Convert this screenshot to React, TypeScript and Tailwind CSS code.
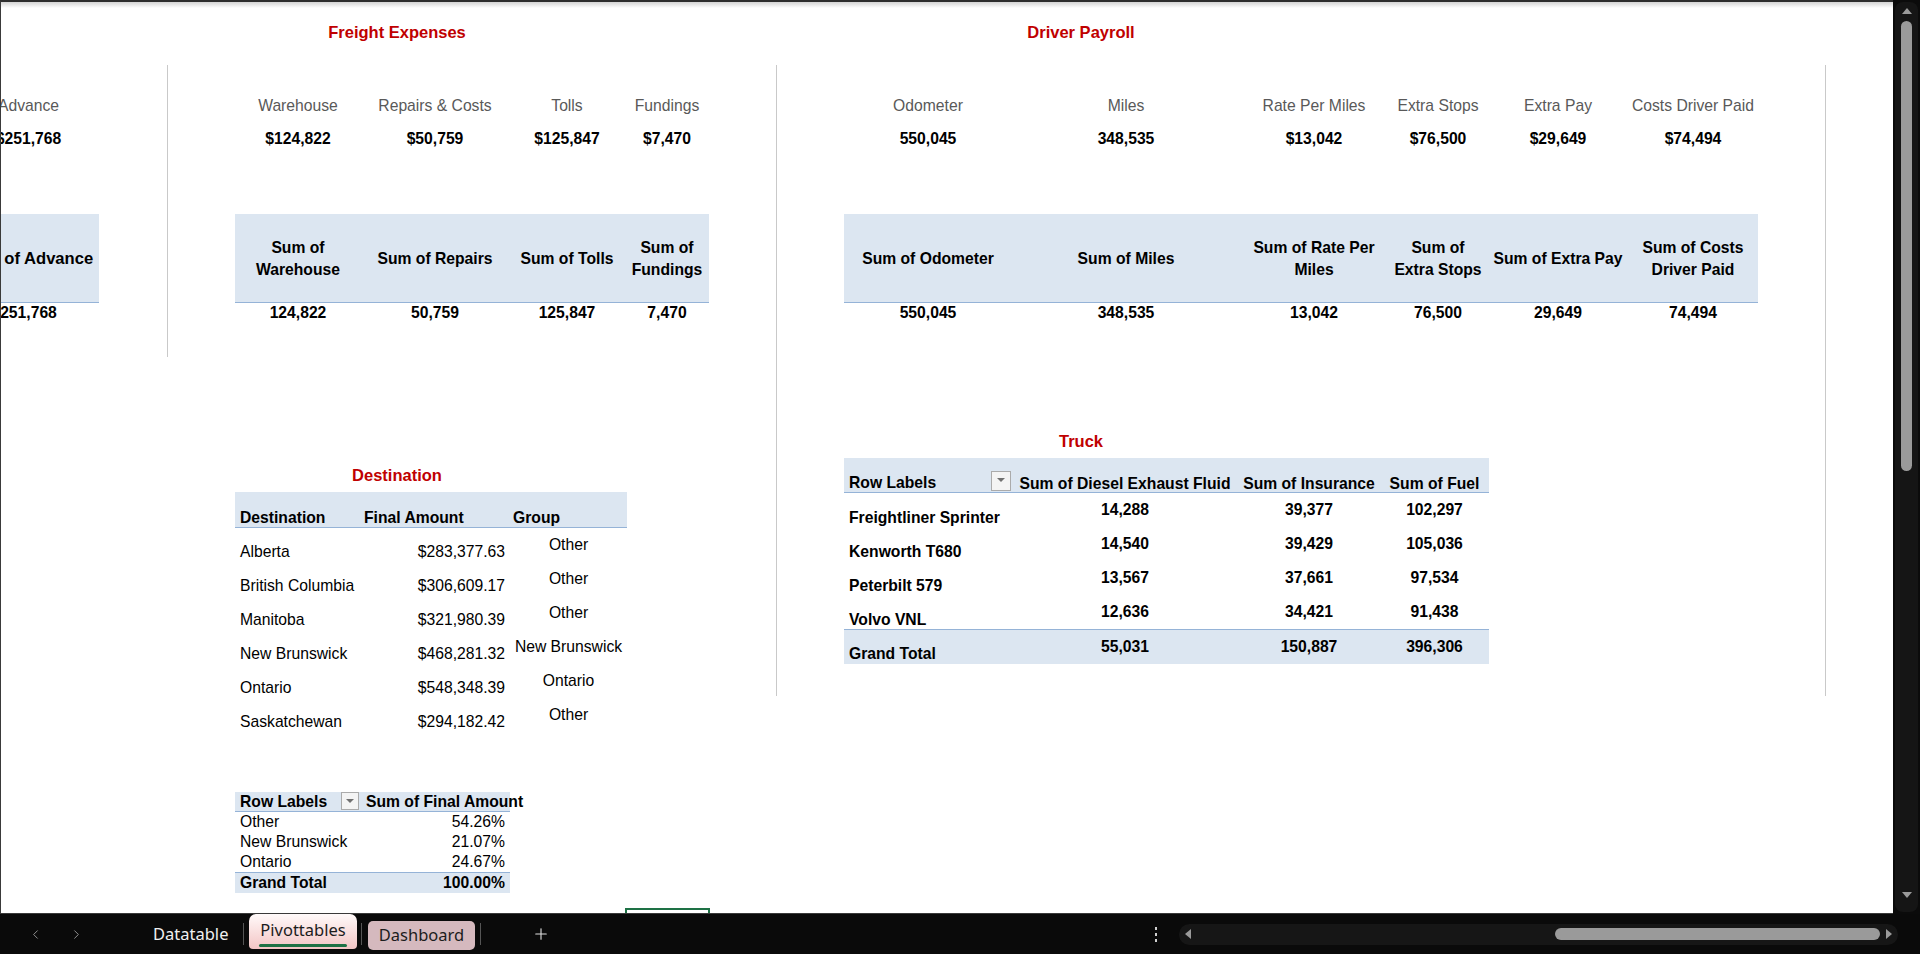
import React from "react";
import { ChevronLeft, ChevronRight, Plus } from "lucide-react";

type Col = { w: string; label: string; value: string; head: string[]; sum: string };

const advanceCols: Col[] = [
  { w: "w-[141px]", label: "Advance", value: "$251,768", head: ["Sum of Advance"], sum: "251,768" },
];
const freightCols: Col[] = [
  { w: "w-[126px]", label: "Warehouse", value: "$124,822", head: ["Sum of", "Warehouse"], sum: "124,822" },
  { w: "w-[148px]", label: "Repairs & Costs", value: "$50,759", head: ["Sum of Repairs"], sum: "50,759" },
  { w: "w-[116px]", label: "Tolls", value: "$125,847", head: ["Sum of Tolls"], sum: "125,847" },
  { w: "w-[84px]", label: "Fundings", value: "$7,470", head: ["Sum of", "Fundings"], sum: "7,470" },
];
const driverCols: Col[] = [
  { w: "w-[168px]", label: "Odometer", value: "550,045", head: ["Sum of Odometer"], sum: "550,045" },
  { w: "w-[228px]", label: "Miles", value: "348,535", head: ["Sum of Miles"], sum: "348,535" },
  { w: "w-[148px]", label: "Rate Per Miles", value: "$13,042", head: ["Sum of Rate Per", "Miles"], sum: "13,042" },
  { w: "w-[100px]", label: "Extra Stops", value: "$76,500", head: ["Sum of", "Extra Stops"], sum: "76,500" },
  { w: "w-[140px]", label: "Extra Pay", value: "$29,649", head: ["Sum of Extra Pay"], sum: "29,649" },
  { w: "w-[130px]", label: "Costs Driver Paid", value: "$74,494", head: ["Sum of Costs", "Driver Paid"], sum: "74,494" },
];

const destinations = [
  ["Alberta", "$283,377.63", "Other"],
  ["British Columbia", "$306,609.17", "Other"],
  ["Manitoba", "$321,980.39", "Other"],
  ["New Brunswick", "$468,281.32", "New Brunswick"],
  ["Ontario", "$548,348.39", "Ontario"],
  ["Saskatchewan", "$294,182.42", "Other"],
];

const trucks = [
  ["Freightliner Sprinter", "14,288", "39,377", "102,297"],
  ["Kenworth T680", "14,540", "39,429", "105,036"],
  ["Peterbilt 579", "13,567", "37,661", "97,534"],
  ["Volvo VNL", "12,636", "34,421", "91,438"],
];

const groups = [
  ["Other", "54.26%"],
  ["New Brunswick", "21.07%"],
  ["Ontario", "24.67%"],
];

function DropBtn({ big }: { big?: boolean }) {
  return (
    <div
      className={`${big ? "h-[20px] w-[20px]" : "h-[18px] w-[18px]"} flex shrink-0 items-start justify-center border border-[#ababab] bg-[#f4f4f4] pt-[6px]`}
    >
      <div className="h-0 w-0 border-x-[4px] border-t-[4px] border-x-transparent border-t-[#707070]" />
    </div>
  );
}

function KpiBlock({ cols, wide }: { cols: Col[]; wide?: boolean }) {
  return (
    <>
      <div className="mt-[54px] flex h-[20px] leading-[20px] text-[#595959]">
        {cols.map((c) => (
          <div key={c.label} className={`${c.w} shrink-0 whitespace-nowrap text-center`}>
            {c.label}
          </div>
        ))}
      </div>
      <div className="mt-[13px] flex h-[20px] font-bold leading-[20px] text-black">
        {cols.map((c) => (
          <div key={c.label} className={`${c.w} shrink-0 whitespace-nowrap text-center`}>
            {c.value}
          </div>
        ))}
      </div>
      <div
        className={`${wide ? "text-[16.6px]" : ""} mt-[65px] flex h-[89px] border-b border-[#95b3d7] bg-[#dce6f1] pt-[2px] font-bold leading-[22px] text-black`}
      >
        {cols.map((c) => (
          <div key={c.label} className={`${c.w} flex shrink-0 flex-col items-center justify-center text-center`}>
            {c.head.map((l) => (
              <div key={l} className="whitespace-nowrap">
                {l}
              </div>
            ))}
          </div>
        ))}
      </div>
      <div className="flex h-[20px] font-bold leading-[20px] text-black">
        {cols.map((c) => (
          <div key={c.label} className={`${c.w} shrink-0 whitespace-nowrap text-center`}>
            {c.sum}
          </div>
        ))}
      </div>
    </>
  );
}

function Sheet() {
  return (
    <div className="relative h-[914px] w-[1893px] shrink-0 overflow-hidden border-b border-l border-t-2 border-b-[#3a3a3a] border-l-[#3a3a3a] border-t-[#2e2e2e] bg-white font-['Liberation_Sans',Arial,sans-serif] text-[15.7px] text-black">
      <div className="pointer-events-none absolute left-0 right-0 top-0 h-[6px] bg-gradient-to-b from-[#d4d4d4] to-white" />

      <div className="-ml-[40px] flex items-start">
        {/* Column A (cut off) */}
        <div className="flex w-[206px] shrink-0 flex-col items-start">
          <div className="-ml-[3px] flex flex-col items-start">
            <div className="mt-[20px] h-[20px]" />
            <KpiBlock cols={advanceCols} wide />
          </div>
        </div>
        <div className="mt-[63px] h-[292px] w-px shrink-0 bg-[#c9c9c9]" />

        {/* Column B : Freight + Destination */}
        <div className="flex w-[608px] shrink-0 flex-col items-start pl-[67px]">
          <div className="mt-[20px] h-[20px] w-[324px] text-center text-[16.5px] font-bold leading-[20px] text-[#c00000]">
            Freight Expenses
          </div>
          <KpiBlock cols={freightCols} />

          <div className="mt-[142px] h-[20px] w-[324px] text-center text-[16.5px] font-bold leading-[20px] text-[#c00000]">
            Destination
          </div>
          <div className="mt-[7px] w-[392px]">
            <div className="flex h-[36px] items-end border-b border-[#95b3d7] bg-[#dce6f1] font-bold leading-[20px]">
              <div className="w-[124px] shrink-0 translate-y-px pl-[5px]">Destination</div>
              <div className="w-[151px] shrink-0 translate-y-px whitespace-nowrap pl-[5px]">Final Amount</div>
              <div className="w-[117px] shrink-0 translate-y-px pl-[3px]">Group</div>
            </div>
            {destinations.map(([n, a, g]) => (
              <div key={n} className="flex h-[34px] leading-[20px]">
                <div className="w-[124px] shrink-0 self-end whitespace-nowrap pl-[5px]">{n}</div>
                <div className="w-[151px] shrink-0 self-end pr-[5px] text-right">{a}</div>
                <div className="w-[117px] shrink-0 self-center whitespace-nowrap text-center">{g}</div>
              </div>
            ))}
          </div>

          <div className="mt-[60px] w-[275px] leading-[20px]">
            <div className="flex h-[20px] border-b border-[#95b3d7] bg-[#dce6f1] font-bold">
              <div className="flex w-[125px] shrink-0 items-start justify-between pl-[5px] pr-[1px]">
                <span className="whitespace-nowrap leading-[19px]">Row Labels</span>
                <DropBtn />
              </div>
              <div className="w-[150px] shrink-0 whitespace-nowrap pl-[6px] leading-[19px]">Sum of Final Amount</div>
            </div>
            {groups.map(([n, v]) => (
              <div key={n} className="flex h-[20px] leading-[20px]">
                <div className="w-[125px] shrink-0 whitespace-nowrap pl-[5px]">{n}</div>
                <div className="w-[150px] shrink-0 pr-[5px] text-right">{v}</div>
              </div>
            ))}
            <div className="flex h-[21px] border-t border-[#95b3d7] bg-[#dce6f1] font-bold leading-[20px]">
              <div className="w-[125px] shrink-0 whitespace-nowrap pl-[5px]">Grand Total</div>
              <div className="w-[150px] shrink-0 pr-[5px] text-right">100.00%</div>
            </div>
          </div>
        </div>
        <div className="mt-[63px] h-[631px] w-px shrink-0 bg-[#c9c9c9]" />

        {/* Column C : Driver Payroll + Truck */}
        <div className="flex w-[1048px] shrink-0 flex-col items-start pl-[67px]">
          <div className="mt-[20px] h-[20px] w-[474px] text-center text-[16.5px] font-bold leading-[20px] text-[#c00000]">
            Driver Payroll
          </div>
          <KpiBlock cols={driverCols} />

          <div className="mt-[108px] h-[20px] w-[474px] text-center text-[16.5px] font-bold leading-[20px] text-[#c00000]">
            Truck
          </div>
          <div className="mt-[7px] w-[645px] font-bold leading-[20px]">
            <div className="flex h-[35px] border-b border-[#95b3d7] bg-[#dce6f1]">
              <div className="flex w-[168px] shrink-0 items-end justify-between pb-px pl-[5px] pr-px">
                <span className="translate-y-[2px] whitespace-nowrap leading-[20px]">Row Labels</span>
                <DropBtn big />
              </div>
              <div className="w-[226px] shrink-0 translate-y-[2px] self-end whitespace-nowrap text-center">Sum of Diesel Exhaust Fluid</div>
              <div className="w-[142px] shrink-0 translate-y-[2px] self-end whitespace-nowrap text-center">Sum of Insurance</div>
              <div className="w-[109px] shrink-0 translate-y-[2px] self-end whitespace-nowrap text-center">Sum of Fuel</div>
            </div>
            {trucks.map(([n, a, b, c]) => (
              <div key={n} className="flex h-[34px]">
                <div className="w-[168px] shrink-0 translate-y-px self-end whitespace-nowrap pl-[5px]">{n}</div>
                <div className="w-[226px] shrink-0 self-center text-center">{a}</div>
                <div className="w-[142px] shrink-0 self-center text-center">{b}</div>
                <div className="w-[109px] shrink-0 self-center text-center">{c}</div>
              </div>
            ))}
            <div className="flex h-[35px] border-t border-[#95b3d7] bg-[#dce6f1]">
              <div className="w-[168px] shrink-0 self-end whitespace-nowrap pl-[5px]">Grand Total</div>
              <div className="w-[226px] shrink-0 self-center text-center">55,031</div>
              <div className="w-[142px] shrink-0 self-center text-center">150,887</div>
              <div className="w-[109px] shrink-0 self-center text-center">396,306</div>
            </div>
          </div>
        </div>
        <div className="mt-[63px] h-[631px] w-px shrink-0 bg-[#c9c9c9]" />
      </div>

      {/* active cell peeking at bottom */}
      <div className="absolute bottom-0 left-[624px] h-[5px] w-[85px] border-x-2 border-t-2 border-[#1e7145]" />
    </div>
  );
}

function VScroll() {
  return (
    <div className="flex h-[914px] w-[27px] shrink-0 bg-[#0b0b0b] p-[2px]">
      <div className="flex flex-1 flex-col items-center rounded-[8px] bg-[#151515]">
        <div className="mt-[6px] h-0 w-0 border-x-[5px] border-b-[6px] border-x-transparent border-b-[#9a9a9a]" />
        <div className="mt-[7px] h-[450px] w-[11px] rounded-full bg-[#9a9a9a]" />
        <div className="mb-[14px] mt-auto h-0 w-0 border-x-[5px] border-t-[6px] border-x-transparent border-t-[#9a9a9a]" />
      </div>
    </div>
  );
}

function TabBar() {
  return (
    <div className="flex h-[40px] items-center bg-[#0a0a0a] font-['Noto_Sans','Open_Sans',sans-serif] text-[16.5px]">
      <div className="flex h-full w-[153px] shrink-0 items-center">
        <ChevronLeft className="ml-[28px] text-[#a0a0a0]" size={15} strokeWidth={1.4} />
        <ChevronRight className="ml-[26px] text-[#a0a0a0]" size={15} strokeWidth={1.4} />
      </div>
      <div className="w-[90px] shrink-0 pt-[1px] text-[#f0f0f0]">Datatable</div>
      <div className="h-[22px] w-px shrink-0 bg-[#555]" />
      <div className="ml-[5px] flex h-[35px] w-[108px] shrink-0 flex-col items-center self-start rounded-b-[4px] rounded-t-[7px] bg-gradient-to-b from-[#fffafa] to-[#f2c5c5] pt-[4px]">
        <span className="leading-[24px] text-[#1c1c1c]">Pivottables</span>
        <div className="mt-[2px] h-[3px] w-[88px] rounded-full bg-[#1e7145]" />
      </div>
      <div className="ml-[4px] h-[22px] w-px shrink-0 bg-[#555]" />
      <div className="ml-[6px] mt-[2px] flex h-[29px] w-[107px] shrink-0 items-center justify-center rounded-[5px] bg-[#d5b9be] text-[#1c1c1c]">
        Dashboard
      </div>
      <div className="ml-[5px] h-[22px] w-px shrink-0 bg-[#555]" />
      <Plus className="ml-[51px] text-[#e0e0e0]" size={18} strokeWidth={1.5} />
      <div className="ml-[604px] flex w-[4px] flex-col items-center gap-[3px]">
        <div className="h-[3px] w-[2px] bg-[#d0d0d0]" />
        <div className="h-[3px] w-[2px] bg-[#d0d0d0]" />
        <div className="h-[3px] w-[2px] bg-[#d0d0d0]" />
      </div>
      <div className="ml-[21px] flex h-[21px] w-[719px] shrink-0 items-center rounded-full bg-[#161616] px-[6px]">
        <div className="h-0 w-0 border-y-[5px] border-r-[6px] border-y-transparent border-r-[#9a9a9a]" />
        <div className="ml-auto h-[12px] w-[325px] rounded-full bg-[#9a9a9a]" />
        <div className="ml-[6px] h-0 w-0 border-y-[5px] border-l-[6px] border-y-transparent border-l-[#9a9a9a]" />
      </div>
    </div>
  );
}

export default function App() {
  return (
    <div className="flex h-[954px] w-[1920px] flex-col overflow-hidden bg-[#0a0a0a]">
      <div className="flex">
        <Sheet />
        <VScroll />
      </div>
      <TabBar />
    </div>
  );
}
